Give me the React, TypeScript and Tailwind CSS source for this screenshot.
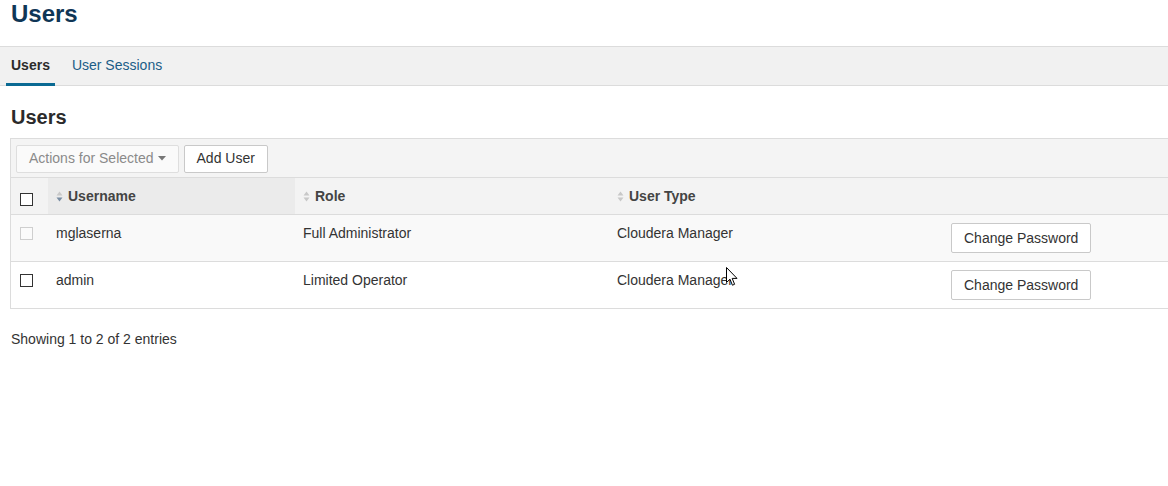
import React from "react";

const users = [
  { name: "mglaserna", role: "Full Administrator", type: "Cloudera Manager", locked: true },
  { name: "admin", role: "Limited Operator", type: "Cloudera Manager", locked: false },
];

function SortIcon({ active }: { active?: boolean }) {
  return (
    <svg width="7" height="11" viewBox="0 0 7 11" className="mr-[5px] shrink-0">
      <path d="M3.5 0.5 L6.5 4.5 L0.5 4.5 Z" fill="#c8c8c8" />
      <path d="M3.5 10.5 L6.5 6.5 L0.5 6.5 Z" fill={active ? "#7a8ea3" : "#c8c8c8"} />
    </svg>
  );
}

function Checkbox({ disabled }: { disabled?: boolean }) {
  return (
    <span
      className={
        disabled
          ? "block w-[13px] h-[13px] border border-[#cfcfcf] bg-[#fbfbfb]"
          : "block w-[13px] h-[13px] border border-[#333] bg-white"
      }
    />
  );
}

export default function App() {
  return (
    <div className="relative w-[1168px] h-[486px] overflow-hidden bg-white text-[14px] text-[#333] font-['Liberation_Sans',Arial,sans-serif]">
      {/* Page title */}
      <h1 className="px-[11px] text-[24px] leading-[28px] font-bold text-[#0f3656]">Users</h1>

      {/* Tabs */}
      <div className="mt-[18px] h-[40px] border-y border-[#dcdcdc] bg-[#f1f1f1] flex items-stretch pl-[6px] pb-[2px]">
        <div className="relative px-[5px] flex items-center font-bold text-[#2b2b2b]">
          Users
          <span className="absolute left-0 right-0 bottom-[-3px] h-[3px] bg-[#0a6a93]" />
        </div>
        <div className="ml-[12px] px-[5px] flex items-center text-[#1b5d87]">User Sessions</div>
      </div>

      {/* Section header */}
      <h2 className="px-[11px] mt-[19px] mb-[9px] text-[20px] leading-[24px] font-bold text-[#2b2b2b]">Users</h2>

      {/* Table */}
      <div className="ml-[10px] border-l border-y border-[#dcdcdc]">
        <div className="h-[39px] bg-[#f4f4f4] border-b border-[#dcdcdc] flex items-center gap-[5px] pl-[5px] pt-[1px]">
          <button className="h-[28px] px-[12px] bg-[#fafafa] border border-[#dedede] rounded-[2px] text-[#8a8a8a] flex items-center gap-[4px]">
            Actions for Selected
            <svg width="8" height="5" viewBox="0 0 8 5">
              <path d="M0 0 L8 0 L4 4.5 Z" fill="#777" />
            </svg>
          </button>
          <button className="h-[28px] px-[12px] bg-white border border-[#c9c9c9] rounded-[2px] text-[#333]">
            Add User
          </button>
        </div>

        <div className="grid grid-cols-[37px_247px_314px_334px_1fr]">
          {/* header */}
          <div className="h-[37px] bg-[#f3f3f3] border-b border-[#dcdcdc] flex items-center pl-[9px] pt-[6px]">
            <Checkbox />
          </div>
          <div className="h-[37px] bg-[#ebebeb] border-b border-[#dcdcdc] flex items-center pl-[8px] font-bold text-[#444]">
            <SortIcon active />
            Username
          </div>
          <div className="h-[37px] bg-[#f3f3f3] border-b border-[#dcdcdc] flex items-center pl-[8px] font-bold text-[#444]">
            <SortIcon />
            Role
          </div>
          <div className="h-[37px] bg-[#f3f3f3] border-b border-[#dcdcdc] flex items-center pl-[8px] font-bold text-[#444]">
            <SortIcon />
            User Type
          </div>
          <div className="h-[37px] bg-[#f3f3f3] border-b border-[#dcdcdc]" />

          {users.map((u, i) => {
            const bg = i % 2 === 0 ? "bg-[#f9f9f9]" : "bg-white";
            const last = i === users.length - 1;
            const cell = `${last ? "h-[46px]" : "h-[47px] border-b border-[#dcdcdc]"} ${bg}`;
            return (
              <React.Fragment key={u.name}>
                <div className={`${cell} pl-[9px] pt-[12px]`}>
                  <Checkbox disabled={u.locked} />
                </div>
                <div className={`${cell} pl-[8px] pt-[9px] leading-[18px]`}>{u.name}</div>
                <div className={`${cell} pl-[8px] pt-[9px] leading-[18px]`}>{u.role}</div>
                <div className={`${cell} pl-[8px] pt-[9px] leading-[18px]`}>{u.type}</div>
                <div className={`${cell} pl-[8px] pt-[8px]`}>
                  <button className="h-[30px] px-[12px] bg-white border border-[#c9c9c9] rounded-[2px] text-[#333]">
                    Change Password
                  </button>
                </div>
              </React.Fragment>
            );
          })}
        </div>
      </div>

      <div className="px-[11px] mt-[21px] leading-[18px]">Showing 1 to 2 of 2 entries</div>

      {/* mouse cursor */}
      <svg width="12" height="20" viewBox="0 0 12 20" className="absolute left-[726px] top-[267px]">
        <path d="M0.5 0.5 L0.5 15.5 L4 12.2 L6.4 18.2 L8.6 17.3 L6.2 11.4 L11 11.4 Z" fill="#fff" stroke="#000" strokeWidth="1" strokeLinejoin="round" />
      </svg>
    </div>
  );
}
